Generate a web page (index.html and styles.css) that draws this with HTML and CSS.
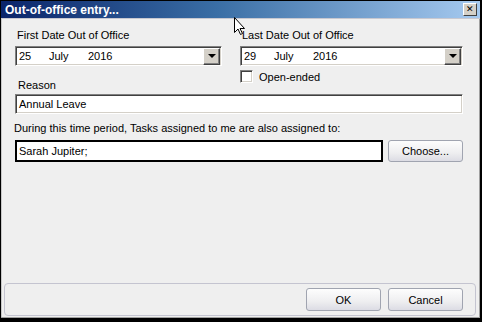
FILE: index.html
```html
<!DOCTYPE html>
<html lang="en">

<head>
    <meta charset="UTF-8">
    <title>Out-of-office entry...</title>
    <link rel="stylesheet" href="styles.css">
</head>

<body>

    <div class="window">
        <div class="titlebar">
            <span class="title">Out-of-office entry...</span>
            <span class="close">&#x2715;</span>
        </div>

        <div class="content">
            <div class="dates">
                <div class="date-col first">
                    <label class="label">First Date Out of Office</label>
                    <div class="combo">
                        <span class="day">25</span>
                        <span class="month">July</span>
                        <span class="year">2016</span>
                        <span class="drop"><span class="arrow"></span></span>
                    </div>
                </div>
                <div class="date-col last">
                    <label class="label">Last Date Out of Office</label>
                    <div class="combo">
                        <span class="day">29</span>
                        <span class="month">July</span>
                        <span class="year">2016</span>
                        <span class="drop"><span class="arrow"></span></span>
                    </div>
                    <div class="check-row">
                        <span class="checkbox"></span>
                        <span>Open-ended</span>
                    </div>
                </div>
            </div>

            <label class="label reason-label">Reason</label>
            <div class="field reason">Annual Leave</div>

            <p class="note">During this time period, Tasks assigned to me are also assigned to:</p>
            <div class="assign-row">
                <div class="field focused">Sarah Jupiter;</div>
                <button class="btn choose">Choose...</button>
            </div>
        </div>

        <div class="footer">
            <button class="btn">OK</button>
            <button class="btn">Cancel</button>
        </div>

        <svg class="cursor" width="12" height="19" viewBox="0 0 12 19">
            <path d="M0.5 0.5 L0.5 15.5 L4 12 L6.5 17.5 L8.5 16.5 L6 11.5 L10.5 11.5 Z" fill="#fff" stroke="#000" stroke-width="1" />
        </svg>
    </div>

</body>

</html>
```

FILE: styles.css
```css
body {
    margin: 0;
    padding: 0;
    background-color: #000;
    font-family: 'Liberation Sans', Arial, sans-serif;
    font-size: 11px;
    color: #000;
}

.window {
    position: relative;
    width: 482px;
    height: 322px;
    box-sizing: border-box;
    border-top: 1px solid #000;
    border-left: 1px solid #000;
    border-right: 2px solid #000;
    border-bottom: 4px solid #000;
    background-color: #efefef;
    box-shadow: inset -1px -1px 0 #a0a0a0, inset 1px 0 0 #c8c8c8;
    display: flex;
    flex-direction: column;
}

.titlebar {
    height: 17px;
    display: flex;
    align-items: center;
    justify-content: space-between;
    padding: 0 3px 0 4px;
    background: linear-gradient(to right, #0a246a 0%, #3a6ea5 45%, #a6caf0 100%);
    border-bottom: 1px solid #c8c8d0;
}

.title {
    color: #fff;
    font-weight: bold;
    font-size: 12px;
}

.close {
    width: 12px;
    height: 11px;
    font-size: 9px;
    line-height: 11px;
    text-align: center;
    background-color: #d4d0c8;
    border: 1px solid;
    border-color: #fff #404040 #404040 #fff;
}

.content {
    flex: 1;
    padding: 10px 17px 0 13px;
}

.dates {
    display: flex;
    gap: 18px;
    padding-left: 1px;
}

.date-col.first {
    width: 207px;
}

.date-col.last {
    flex: 1;
}

.label {
    display: block;
    padding-left: 2px;
    line-height: 13px;
    margin-bottom: 4px;
}

.combo {
    height: 20px;
    box-sizing: border-box;
    display: flex;
    align-items: center;
    background-color: #fff;
    border: 1px solid;
    border-color: #808080 #fff #fff #808080;
    box-shadow: inset 1px 1px 0 #404040, inset -1px -1px 0 #d4d0c8;
    padding-left: 3px;
}

.day {
    width: 30px;
}

.month {
    width: 39px;
}

.year {
    flex: 1;
}

.drop {
    width: 15px;
    height: 15px;
    margin-right: 1px;
    display: flex;
    align-items: center;
    justify-content: center;
    background-color: #d4d0c8;
    border: 1px solid;
    border-color: #fff #404040 #404040 #fff;
    box-shadow: inset -1px -1px 0 #808080;
}

.arrow {
    width: 0;
    height: 0;
    border-left: 4px solid transparent;
    border-right: 4px solid transparent;
    border-top: 4px solid #000;
}

.check-row {
    display: flex;
    align-items: center;
    gap: 6px;
    margin-top: 4px;
}

.checkbox {
    width: 11px;
    height: 11px;
    background-color: #fff;
    border: 1px solid;
    border-color: #808080 #fff #fff #808080;
    box-shadow: inset 1px 1px 0 #404040, inset -1px -1px 0 #d4d0c8;
}

.reason-label {
    margin-top: -4px;
    margin-bottom: 2px;
    padding-left: 4px;
}

.field {
    height: 20px;
    box-sizing: border-box;
    display: flex;
    align-items: center;
    padding-left: 3px;
    background-color: #fff;
    border: 1px solid;
    border-color: #808080 #fff #fff #808080;
    box-shadow: inset 1px 1px 0 #404040, inset -1px -1px 0 #d4d0c8;
}

.reason {
    margin-left: 1px;
}

.note {
    margin: 8px 0 5px;
    line-height: 13px;
}

.assign-row {
    display: flex;
    gap: 5px;
    padding-left: 1px;
}

.field.focused {
    flex: 1;
    height: 22px;
    border: 1px solid #000;
    box-shadow: inset 1px 1px 0 #000, inset -1px -1px 0 #000;
}

.btn {
    font-family: 'Liberation Sans', Arial, sans-serif;
    font-size: 11px;
    color: #000;
    width: 75px;
    height: 23px;
    border: 1px solid #a0a4b0;
    border-radius: 3px;
    background: linear-gradient(to bottom, #fdfdfd 0%, #eeeef0 60%, #dcdce4 100%);
    padding: 0;
}

.btn.choose {
    height: 22px;
}

.footer {
    margin: 0 4px 2px 3px;
    height: 33px;
    box-sizing: border-box;
    display: flex;
    justify-content: flex-end;
    align-items: center;
    gap: 7px;
    padding: 0 12px 0 0;
    border: 1px solid #c4c4d0;
    border-radius: 4px;
}

.cursor {
    position: absolute;
    left: 233px;
    top: 16px;
}
```
